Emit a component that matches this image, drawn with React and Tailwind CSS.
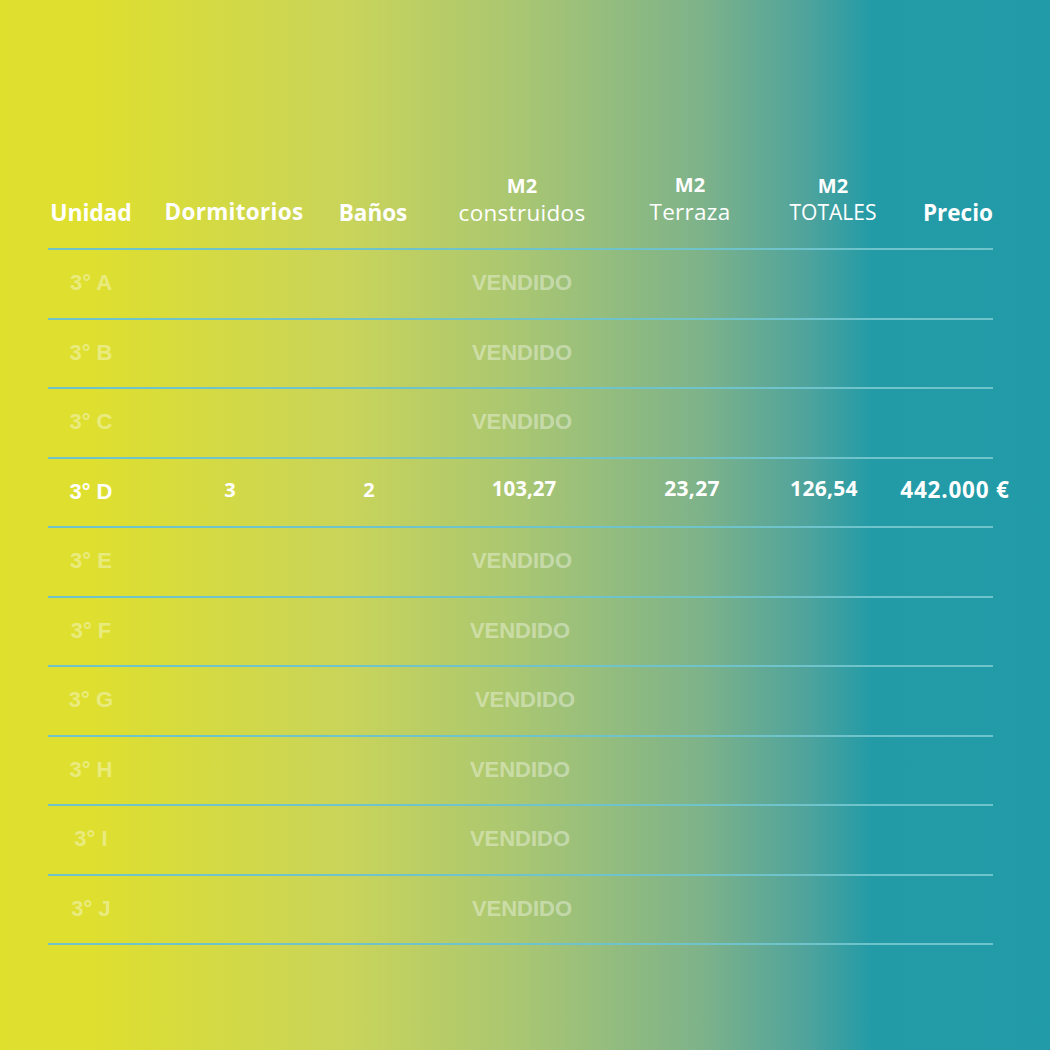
import React from "react";

const rows = [
  { u: "3° A", v: "-ml-[4px]" },
  { u: "3° B", v: "-ml-[4px]" },
  { u: "3° C", v: "-ml-[4px]" },
  { u: "3° D", d: "3", b: "2", c: "103,27", t: "23,27", tot: "126,54", p: "442.000 €" },
  { u: "3° E", v: "-ml-[4px]" },
  { u: "3° F", v: "-ml-[8px]" },
  { u: "3° G", v: "ml-[2px]" },
  { u: "3° H", v: "-ml-[8px]" },
  { u: "3° I", v: "-ml-[8px]" },
  { u: "3° J", v: "-ml-[4px]" },
];

const headFont = { fontFamily: '"Open Sans", "Noto Sans", sans-serif' };
const labelFont = { fontFamily: '"Liberation Sans", Arial, sans-serif' };

function Line() {
  return <div className="h-[2px] w-[945px] bg-[#6fc4cb]" />;
}

export default function App() {
  return (
    <div className="w-[1050px] h-[1050px] overflow-hidden bg-[linear-gradient(to_right,#dfdf2e_0%,#dedf2f_9%,#c9d45a_33%,#a8c673_50%,#7db28a_67%,#4ea39c_77%,#239ba7_83%,#229ba8_100%)] pt-[170px] pl-[48px] text-white">
      {/* Header */}
      <div
        style={headFont}
        className="grid h-[78px] grid-cols-[86px_200px_78px_220px_116px_170px_80px] items-end pb-[22px] leading-[27px]"
      >
        <div className="text-center text-[23px] font-bold tracking-[-0.2px]">Unidad</div>
        <div className="text-center text-[22.5px] font-bold pb-[1px] tracking-[0.3px]">Dormitorios</div>
        <div className="text-center text-[22.5px] font-bold">Baños</div>
        <div className="flex flex-col items-center">
          <span className="text-[20px] font-bold">M2</span>
          <span className="text-[22.5px] font-normal tracking-[0.3px]">construidos</span>
        </div>
        <div className="flex flex-col items-center pb-[1px]">
          <span className="text-[20px] font-bold">M2</span>
          <span className="text-[22.5px] font-normal tracking-[0.3px]">Terraza</span>
        </div>
        <div className="flex flex-col items-center">
          <span className="text-[20px] font-bold">M2</span>
          <span className="text-[21px] font-normal">TOTALES</span>
        </div>
        <div className="text-center text-[22.5px] font-bold">Precio</div>
      </div>
      <Line />

      {rows.map((r) => (
        <div key={r.u}>
          <div className="grid h-[67.5px] grid-cols-[86px_192px_86px_224px_112px_152px_110px] items-center">
            <div
              style={labelFont}
              className={`text-center text-[22px] font-bold -translate-y-[1px] ${r.d ? "text-white" : "text-white/40"}`}
            >
              {r.u}
            </div>
            {r.d ? (
              <>
                <div style={headFont} className="text-center text-[20px] font-bold -translate-y-[2px]">{r.d}</div>
                <div style={headFont} className="text-center text-[20px] font-bold -translate-y-[2px]">{r.b}</div>
                <div style={headFont} className="text-center text-[20.5px] font-bold -translate-y-[4px]">{r.c}</div>
                <div style={headFont} className="text-center text-[21px] font-bold -translate-y-[4px] tracking-[0.3px]">{r.t}</div>
                <div style={headFont} className="text-center text-[21px] font-bold -translate-y-[4px] tracking-[0.3px]">{r.tot}</div>
                <div style={headFont} className="text-center text-[22.5px] font-bold whitespace-nowrap tracking-[0.8px] -translate-y-[2px]">{r.p}</div>
              </>
            ) : (
              <>
                <div />
                <div />
                <div
                  style={labelFont}
                  className={`text-center text-[22px] font-bold text-white/40 -translate-y-[1px] ${r.v}`}
                >
                  VENDIDO
                </div>
              </>
            )}
          </div>
          <Line />
        </div>
      ))}
    </div>
  );
}
